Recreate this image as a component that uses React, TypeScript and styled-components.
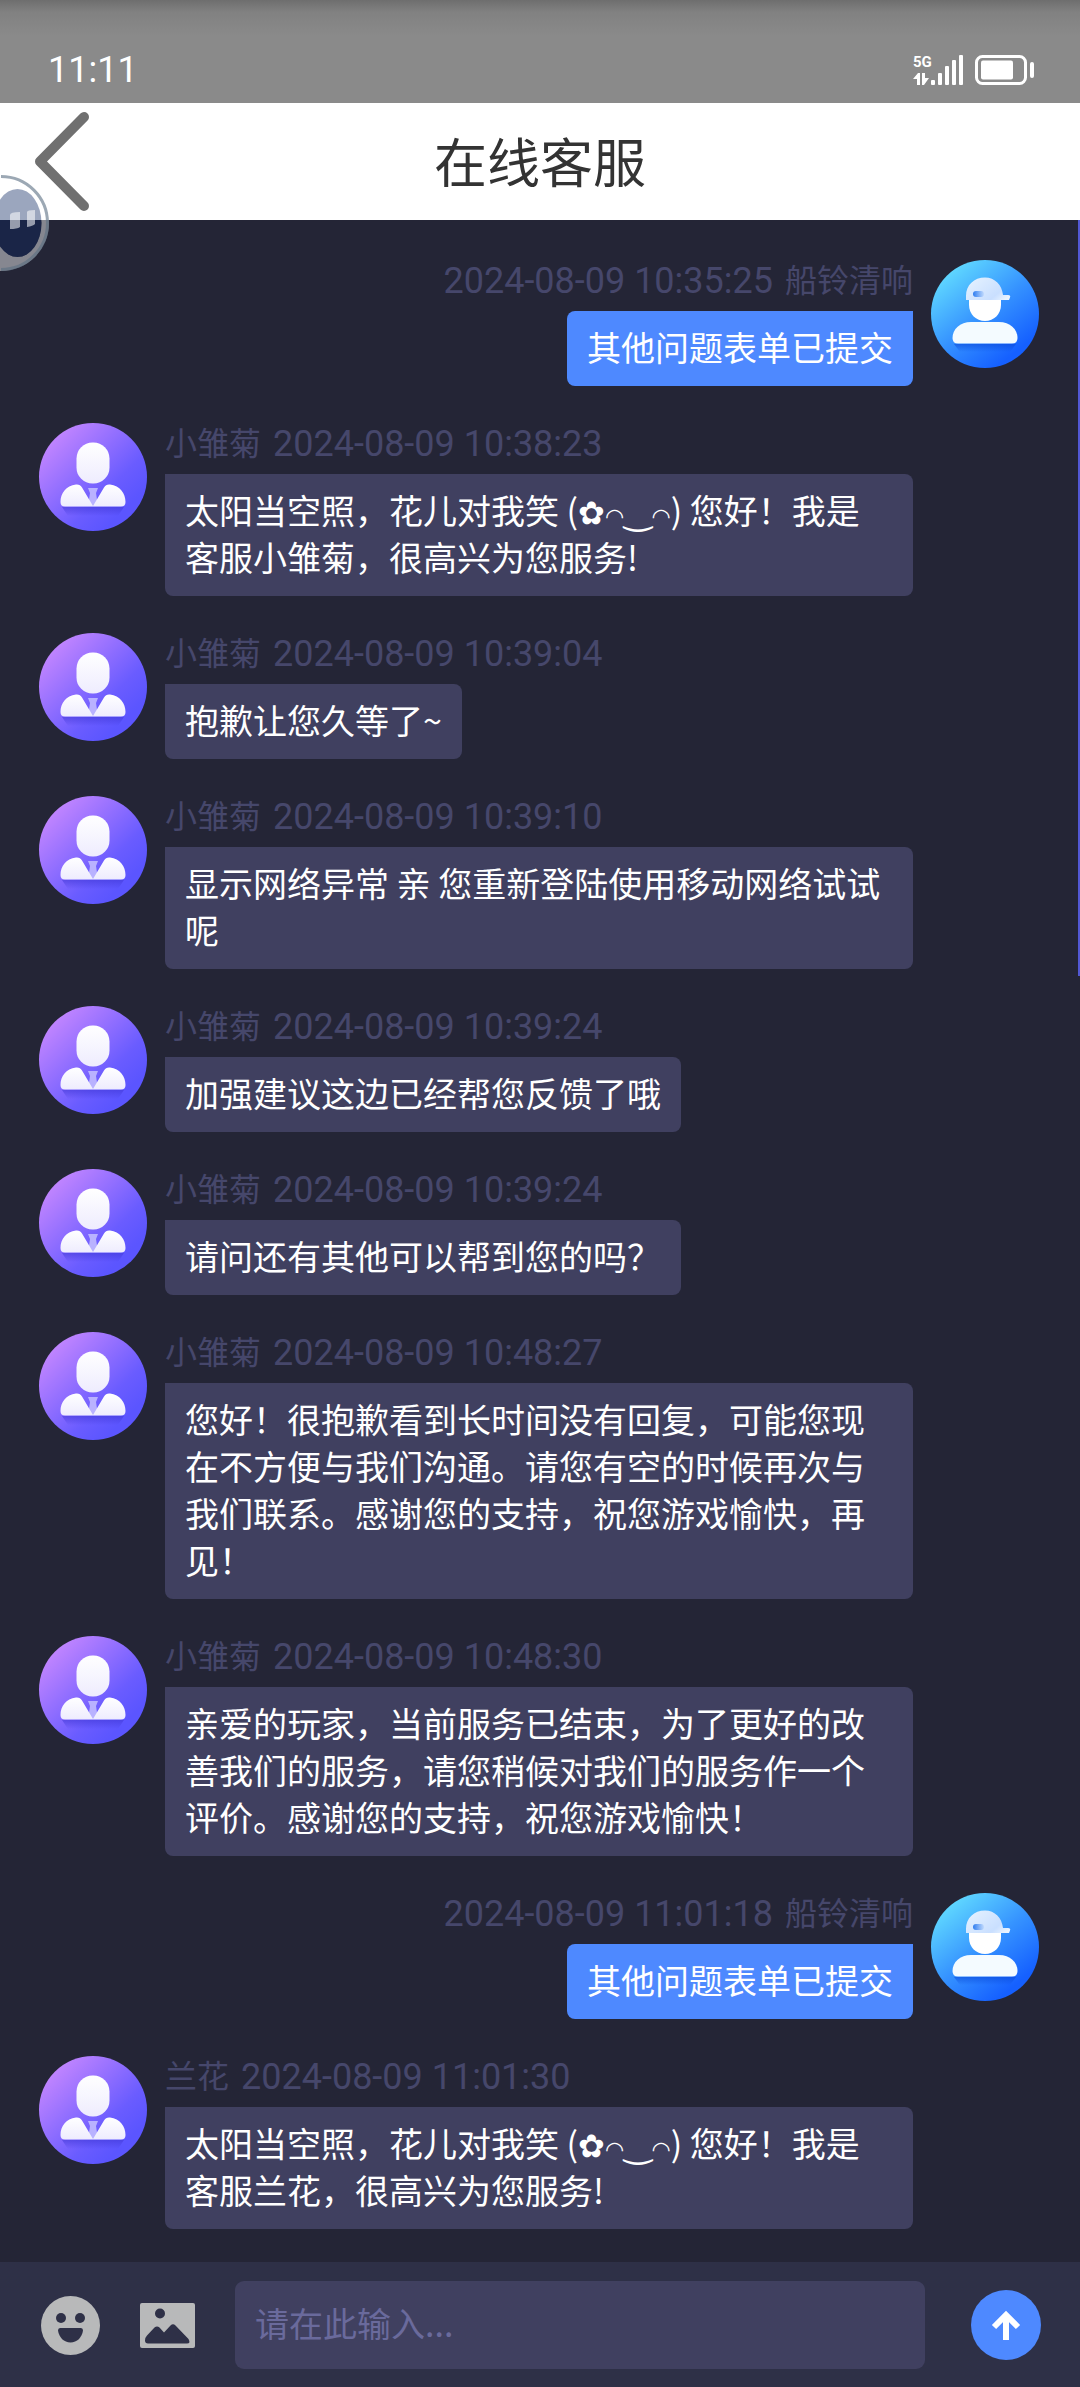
import React from "react";
import styled, { createGlobalStyle } from "styled-components";

const GlobalStyle = createGlobalStyle`
  * {
    box-sizing: border-box;
  }
  body {
    margin: 0;
    background: #242536;
    font-family: "Noto Sans CJK SC", "Noto Sans", sans-serif;
  }
`;

const Page = styled.div`
  position: relative;
  display: flex;
  flex-direction: column;
  min-height: 100vh;
`;

const StatusBar = styled.div`
  display: flex;
  justify-content: space-between;
  align-items: flex-end;
  height: 103px;
  padding: 0 46px 18px 48px;
  color: #fff;
  background: linear-gradient(#6e6e6e, #818181 12px, #8a8a8a 36px);
`;

const Clock = styled.time`
  font: 400 36px/30px Roboto, sans-serif;
`;

const StatusIcons = styled.div`
  display: flex;
  align-items: flex-end;
  gap: 12px;
`;

const Network = styled.div`
  display: flex;
  align-items: flex-end;
`;

const NetworkType = styled.div`
  display: flex;
  flex-direction: column;
  gap: 3px;
  width: 18px;
  font: 700 15px/16px Roboto, sans-serif;
`;

const Header = styled.header`
  display: grid;
  grid-template-columns: 1fr auto 1fr;
  align-items: center;
  height: 117px;
  padding: 0 35px;
  background: #fff;
`;

const BackButton = styled.button`
  display: flex;
  justify-self: start;
  padding: 0;
  border: 0;
  background: none;
`;

const Title = styled.h1`
  margin: 0;
  padding-bottom: 4px;
  font-size: 53px;
  font-weight: 400;
  line-height: 64px;
  color: #333;
`;

const Assistant = styled.button`
  position: absolute;
  top: 174px;
  left: 0;
  display: flex;
  padding: 0;
  border: 0;
  background: none;
`;

const Conversation = styled.main`
  position: relative;
  flex: 1;
  padding: 40px 41px 32px 39px;
`;

const ScrollThumb = styled.div`
  position: absolute;
  top: 0;
  right: 0;
  width: 2px;
  height: 37%;
  background: #5258d4;
`;

const Messages = styled.ol`
  display: flex;
  flex-direction: column;
  gap: 37px;
  margin: 0;
  padding: 0;
  list-style: none;
`;

const Row = styled.li<{ $own: boolean }>`
  display: flex;
  flex-direction: ${(p) => (p.$own ? "row-reverse" : "row")};
  align-items: flex-start;
  gap: 18px;
  ${(p) => (p.$own ? "padding-left" : "padding-right")}: 126px;

  > svg {
    flex: none;
  }
`;

const Column = styled.div<{ $own: boolean }>`
  display: flex;
  flex: 1;
  flex-direction: column;
  align-items: ${(p) => (p.$own ? "flex-end" : "flex-start")};
  min-width: 0;
`;

const Meta = styled.div`
  display: flex;
  gap: 12px;
  height: 51px;
  font-size: 32px;
  line-height: 36px;
  color: #46476b;
`;

const Stamp = styled.time`
  font-family: Roboto, sans-serif;
  font-weight: 400;
  font-size: 36px;
  line-height: 42px;
`;

const Bubble = styled.p<{ $own: boolean }>`
  max-width: 100%;
  margin: 0;
  padding: 12px 20px 16px;
  border-radius: ${(p) => (p.$own ? "8px 0 8px 8px" : "0 8px 8px 8px")};
  font-size: 34px;
  line-height: 47px;
  color: #fff;
  background: ${(p) => (p.$own ? "#4e89ff" : "#404060")};
`;

const Symbol = styled.span<{ $size: number }>`
  font-family: "DejaVu Sans", sans-serif;
  font-size: ${(p) => p.$size}px;
  line-height: 1;
`;

const Composer = styled.form`
  display: flex;
  align-items: center;
  gap: 40px;
  padding: 19px 39px 18px 41px;
  background: #2e3047;
`;

const ToolButton = styled.button`
  display: flex;
  padding: 0;
  border: 0;
  background: none;
`;

const MessageInput = styled.input`
  flex: 1;
  min-width: 0;
  height: 88px;
  padding: 0 20px 6px;
  border: 0;
  border-radius: 9px;
  font: inherit;
  font-size: 34px;
  color: #fff;
  background: #404060;

  &::placeholder {
    color: #6a6a9c;
    opacity: 1;
  }
`;

const SendButton = styled.button`
  display: flex;
  align-items: center;
  justify-content: center;
  width: 70px;
  height: 70px;
  margin-left: 6px;
  padding: 0;
  border: 0;
  border-radius: 50%;
  background: #4e89ff;
`;

const AgentAvatar = ({ id }: { id: string }) => (
  <svg width="108" height="108" viewBox="0 0 108 108" aria-hidden="true">
    <defs>
      <linearGradient id={`${id}-bg`} x1="0.12" y1="0.12" x2="0.8" y2="0.8">
        <stop offset="0" stopColor="#c486ff" />
        <stop offset="0.75" stopColor="#6a5cff" />
        <stop offset="1" stopColor="#5b55ff" />
      </linearGradient>
      <linearGradient id={`${id}-fg`} x1="0" y1="0" x2="0" y2="1">
        <stop offset="0" stopColor="#fff" />
        <stop offset="1" stopColor="#eeecfe" />
      </linearGradient>
      <linearGradient id={`${id}-sh`} x1="0" y1="0" x2="0" y2="1">
        <stop offset="0" stopColor="#4038d8" stopOpacity="0.6" />
        <stop offset="1" stopColor="#4038d8" stopOpacity="0" />
      </linearGradient>
    </defs>
    <circle cx="54" cy="54" r="54" fill={`url(#${id}-bg)`} />
    <path d="M23 84H85L79 93H29Z" fill={`url(#${id}-sh)`} />
    <rect x="37.500" y="19.500" width="33" height="41" rx="16" ry="16" fill={`url(#${id}-fg)`} />
    <path d="M49 65H59L57 70L59 83H49L51 70Z" fill="#b9b2ff" />
    <path
      d="M37 61.500Q41 61 43 64.500L54 83L65 64.500Q67 61 71 61.500C81 63 86.500 70 86.500 79Q86.500 83.500 82 83.500H26Q21.500 83.500 21.500 79C21.500 70 27 63 37 61.500Z"
      fill={`url(#${id}-fg)`}
    />
  </svg>
);

const UserAvatar = ({ id }: { id: string }) => (
  <svg width="108" height="108" viewBox="0 0 108 108" aria-hidden="true">
    <defs>
      <linearGradient id={`${id}-bg`} x1="0.12" y1="0.1" x2="0.75" y2="0.88">
        <stop offset="0" stopColor="#62dcff" />
        <stop offset="0.55" stopColor="#3592ff" />
        <stop offset="1" stopColor="#1560ff" />
      </linearGradient>
      <linearGradient id={`${id}-hat`} x1="0" y1="0.2" x2="1" y2="0.8">
        <stop offset="0" stopColor="#e4f1ff" />
        <stop offset="0.75" stopColor="#c9dfff" />
        <stop offset="1" stopColor="#e9f3ff" />
      </linearGradient>
      <linearGradient id={`${id}-badge`}>
        <stop offset="0" stopColor="#2f7df0" />
        <stop offset="1" stopColor="#2f7df0" stopOpacity="0.1" />
      </linearGradient>
      <linearGradient id={`${id}-sh`} x1="0" y1="0" x2="0" y2="1">
        <stop offset="0" stopColor="#0a48d8" stopOpacity="0.6" />
        <stop offset="1" stopColor="#0a48d8" stopOpacity="0" />
      </linearGradient>
    </defs>
    <circle cx="54" cy="54" r="54" fill={`url(#${id}-bg)`} />
    <path d="M23 84H85L79 92H29Z" fill={`url(#${id}-sh)`} />
    <path d="M38 38H70V45C70 54 63 61 54 61S38 54 38 45Z" fill="#fff" />
    <path d="M35 40V36C35 25 43 17.500 54 17.500C64 17.500 71 25 72 35H77Q80 35 79 37.500L78 40Z" fill={`url(#${id}-hat)`} />
    <rect x="42" y="31" width="11" height="6" rx="3" fill={`url(#${id}-badge)`} />
    <path d="M40 62H68C79 62 86.500 69 86.500 78Q86.500 83.500 81 83.500H27Q21.500 83.500 21.500 78C21.500 69 29 62 40 62Z" fill="#f4fbff" />
  </svg>
);

const Greeting = ({ name }: { name: string }) => (
  <>
    太阳当空照，花儿对我笑 (<Symbol $size={32}>✿</Symbol>
    <Symbol $size={22}>◠</Symbol>
    <Symbol $size={34}>‿</Symbol>
    <Symbol $size={22}>◠</Symbol>
    {`) 您好！我是客服${name}，很高兴为您服务!`}
  </>
);

type Message = { name: string; at: string; own?: boolean; text: React.ReactNode };

const messages: Message[] = [
  { name: "船铃清响", at: "2024-08-09 10:35:25", own: true, text: "其他问题表单已提交" },
  { name: "小雏菊", at: "2024-08-09 10:38:23", text: <Greeting name="小雏菊" /> },
  { name: "小雏菊", at: "2024-08-09 10:39:04", text: "抱歉让您久等了~" },
  { name: "小雏菊", at: "2024-08-09 10:39:10", text: "显示网络异常 亲 您重新登陆使用移动网络试试呢" },
  { name: "小雏菊", at: "2024-08-09 10:39:24", text: "加强建议这边已经帮您反馈了哦" },
  { name: "小雏菊", at: "2024-08-09 10:39:24", text: "请问还有其他可以帮到您的吗？" },
  {
    name: "小雏菊",
    at: "2024-08-09 10:48:27",
    text: "您好！很抱歉看到长时间没有回复，可能您现在不方便与我们沟通。请您有空的时候再次与我们联系。感谢您的支持，祝您游戏愉快，再见！",
  },
  {
    name: "小雏菊",
    at: "2024-08-09 10:48:30",
    text: "亲爱的玩家，当前服务已结束，为了更好的改善我们的服务，请您稍候对我们的服务作一个评价。感谢您的支持，祝您游戏愉快！",
  },
  { name: "船铃清响", at: "2024-08-09 11:01:18", own: true, text: "其他问题表单已提交" },
  { name: "兰花", at: "2024-08-09 11:01:30", text: <Greeting name="兰花" /> },
];

export default function App() {
  return (
    <Page>
      <GlobalStyle />
      <StatusBar>
        <Clock>11:11</Clock>
        <StatusIcons>
          <Network>
            <NetworkType>
              5G
              <svg width="16" height="12" viewBox="0 0 16 12" fill="#fff" aria-hidden="true">
                <path d="M0 6L5 0H7V12H4V6ZM9 0H12V5H16L11 12H9Z" />
              </svg>
            </NetworkType>
            <svg width="32" height="30" viewBox="0 0 32 30" fill="#fff" aria-hidden="true">
              <rect x="0" y="25" width="4" height="5" rx="1" />
              <rect x="7" y="18" width="4" height="12" rx="1" />
              <rect x="14" y="11" width="4" height="19" rx="1" />
              <rect x="21" y="5" width="4" height="25" rx="1" />
              <rect x="28" y="0" width="4" height="30" rx="1" />
            </svg>
          </Network>
          <svg width="59" height="30" viewBox="0 0 59 30" fill="#fff" aria-hidden="true">
            <rect x="1.500" y="1.500" width="49" height="27" rx="6" fill="none" stroke="#fff" strokeWidth="3" />
            <rect x="6" y="5.500" width="32" height="19" rx="2" />
            <rect x="55" y="7" width="4" height="16" rx="2" />
          </svg>
        </StatusIcons>
      </StatusBar>

      <Header>
        <BackButton type="button" aria-label="返回">
          <svg width="54" height="99" viewBox="0 0 54 99" fill="none" aria-hidden="true">
            <path d="M49 5L5 49.500L49 94" stroke="#707070" strokeWidth="10" strokeLinecap="round" strokeLinejoin="round" />
          </svg>
        </BackButton>
        <Title>在线客服</Title>
      </Header>

      <Conversation>
        <Messages>
          {messages.map((m, i) => (
            <Row key={i} $own={!!m.own}>
              {m.own ? <UserAvatar id={`user-${i}`} /> : <AgentAvatar id={`agent-${i}`} />}
              <Column $own={!!m.own}>
                <Meta>
                  {!m.own && <span>{m.name}</span>}
                  <Stamp>{m.at}</Stamp>
                  {m.own && <span>{m.name}</span>}
                </Meta>
                <Bubble $own={!!m.own}>{m.text}</Bubble>
              </Column>
            </Row>
          ))}
        </Messages>
        <ScrollThumb />
      </Conversation>

      <Composer onSubmit={(e) => e.preventDefault()}>
        <ToolButton type="button" aria-label="表情">
          <svg width="59" height="59" viewBox="0 0 59 59" aria-hidden="true">
            <circle cx="29.500" cy="29.500" r="29.500" fill="#b8b9ba" />
            <circle cx="20" cy="22" r="5" fill="#2e3047" />
            <circle cx="39" cy="22" r="5" fill="#2e3047" />
            <path d="M19 32H40Q42 32 42 34.500C41 41.500 36 46.500 29.500 46.500S18 41.500 17 34.500Q17 32 19 32Z" fill="#2e3047" />
          </svg>
        </ToolButton>
        <ToolButton type="button" aria-label="图片">
          <svg width="55" height="45" viewBox="0 0 55 45" aria-hidden="true">
            <rect width="55" height="45" rx="2" fill="#b8b9ba" />
            <circle cx="20" cy="10.500" r="5" fill="#2e3047" />
            <path
              d="M7 32.500L14.500 24.500Q17 22.500 19.500 24.500L24 29.500L30.500 22.500Q33 20 35.500 22.500L48.500 36Q51 40.500 47 40.500H8Q5 40.500 5 37.500Q5 34.500 7 32.500Z"
              fill="#2e3047"
            />
          </svg>
        </ToolButton>
        <MessageInput type="text" aria-label="消息" placeholder="请在此输入..." />
        <SendButton type="submit" aria-label="发送">
          <svg width="30" height="30" viewBox="0 0 30 30" aria-hidden="true">
            <path d="M15 30V4M3 17L15 5L27 17" fill="none" stroke="#fff" strokeWidth="6" />
          </svg>
        </SendButton>
      </Composer>

      <Assistant type="button" aria-label="悬浮助手">
        <svg width="50" height="97" viewBox="0 0 50 97" aria-hidden="true">
          <path
            d="M1 1A48 48 0 0 1 1 97H0V1ZM17.500 15A24 34 0 0 0 17.500 83A24 34 0 0 0 17.500 15Z"
            fill="#fff"
            fillOpacity="0.45"
            fillRule="evenodd"
          />
          <ellipse cx="17.500" cy="49" rx="24" ry="34" fill="#0c2860" fillOpacity="0.41" />
          <path d="M1 2.500A46.500 46.500 0 0 1 1 95.500" fill="none" stroke="#5a6e82" strokeOpacity="0.6" strokeWidth="3" />
          <path d="M10 41Q10 38 20 38V53Q17 55 10 55ZM27 38Q27 36 35 36V50Q33 52 27 53Z" fill="#fff" fillOpacity="0.55" />
        </svg>
      </Assistant>
    </Page>
  );
}
